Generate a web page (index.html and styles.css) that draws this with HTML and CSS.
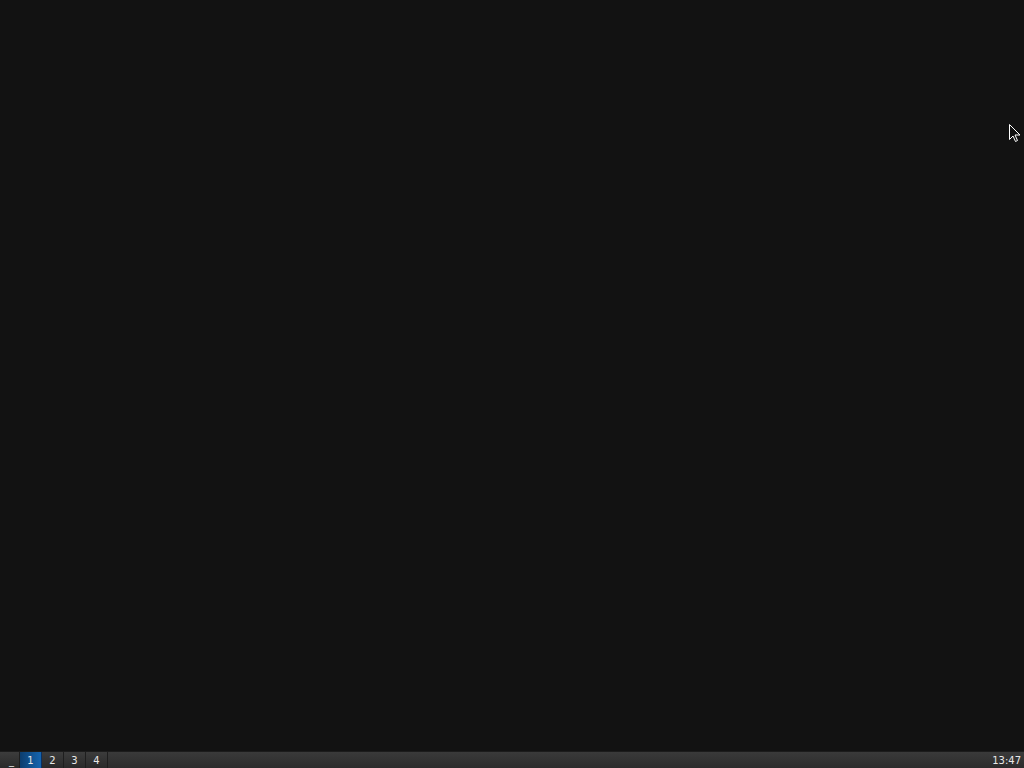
FILE: index.html
```html
<!DOCTYPE html>
<html lang="en">
<head>
  <meta charset="UTF-8">
  <title>Desktop</title>
  <link rel="stylesheet" href="styles.css">
</head>
<body>
  <div class="desktop">
    <svg class="cursor" width="12" height="19" viewBox="0 0 12 19">
      <path d="M0.5 0.5 L0.5 15.5 L4 12 L6.5 17.5 L8.5 16.5 L6 11 L11 11 Z" fill="#111" stroke="#fff" stroke-width="1"/>
    </svg>
  </div>
  <div class="taskbar">
    <div class="tabs">
      <span class="tab min">_</span>
      <span class="tab active">1</span>
      <span class="tab">2</span>
      <span class="tab">3</span>
      <span class="tab">4</span>
    </div>
    <span class="clock">13:47</span>
  </div>
</body>
</html>
```

FILE: styles.css
```css
html, body {
  margin: 0;
  height: 100%;
  background: #121212;
  font-family: "DejaVu Sans", sans-serif;
  overflow: hidden;
}

body {
  display: flex;
  flex-direction: column;
}

.desktop {
  flex: 1;
  position: relative;
}

.cursor {
  position: absolute;
  left: 1009px;
  top: 124px;
}

.taskbar {
  height: 16px;
  background: linear-gradient(#3a3a3a, #2c2c2c);
  border-top: 1px solid #1c1c1c;
  display: flex;
  justify-content: space-between;
  align-items: stretch;
  color: #e8e8e8;
  font-size: 10px;
}

.tabs {
  display: flex;
}

.tab {
  width: 21px;
  border-right: 1px solid #1e1e1e;
  display: flex;
  align-items: center;
  justify-content: center;
  background: linear-gradient(#3c3c3c, #2a2a2a);
}

.tab.min {
  width: 15px;
  padding: 0 0 0 4px;
}

.tab.active {
  background: linear-gradient(90deg, #0c3d6e, #1565b0);
  border-right-color: #0c3060;
}

.clock {
  display: flex;
  align-items: center;
  padding-right: 3px;
}
```
